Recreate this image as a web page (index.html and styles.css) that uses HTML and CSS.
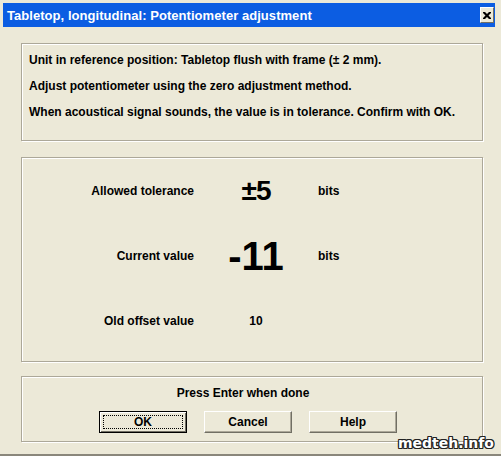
FILE: index.html
```html
<!DOCTYPE html>
<html>
<head>
<meta charset="utf-8">
<link rel="stylesheet" href="styles.css">
</head>
<body>
<div class="window">
  <div class="titlebar">
    <span class="title">Tabletop, longitudinal: Potentiometer adjustment</span>
    <span class="close">
      <svg width="8" height="7" viewBox="0 0 8 7"><path d="M0 0h2l2 2 2-2h2v1l-2.5 2.5L8 6v1H6L4 5 2 7H0V6l2.5-2.5L0 1z" fill="#000"/></svg>
    </span>
  </div>
  <div class="content">
    <div class="group info">
      <p>Unit in reference position: Tabletop flush with frame (± 2 mm).</p>
      <p>Adjust potentiometer using the zero adjustment method.</p>
      <p>When acoustical signal sounds, the value is in tolerance. Confirm with OK.</p>
    </div>
    <div class="group values">
      <div class="row">
        <span class="label">Allowed tolerance</span>
        <span class="val mid">±5</span>
        <span class="unit">bits</span>
      </div>
      <div class="row">
        <span class="label">Current value</span>
        <span class="val big">-11</span>
        <span class="unit">bits</span>
      </div>
      <div class="row">
        <span class="label">Old offset value</span>
        <span class="val small">10</span>
        <span class="unit"></span>
      </div>
    </div>
    <div class="group actions">
      <div class="hint">Press Enter when done</div>
      <div class="buttons">
        <button class="btn default"><span class="focus">OK</span></button>
        <button class="btn">Cancel</button>
        <button class="btn">Help</button>
      </div>
    </div>
  </div>
  <div class="watermark">medteh.info</div>
</div>
</body>
</html>
```
FILE: styles.css
```css
html, body {
  margin: 0;
  padding: 0;
}
body {
  width: 501px;
  height: 456px;
  overflow: hidden;
  background: #ECE9D8;
  font-family: "Liberation Sans", Arial, sans-serif;
  font-size: 12px;
  font-weight: bold;
  color: #000;
}
.window {
  position: relative;
  box-sizing: border-box;
  width: 501px;
  height: 456px;
  padding: 3px 6px 0 3px;
  background: #ECE9D8;
  border-bottom: 2px solid #8a877b;
}
.titlebar {
  height: 24px;
  background: #0c5de2;
  display: flex;
  align-items: center;
  justify-content: space-between;
  padding: 0 1px 0 4px;
}
.title {
  color: #fff;
  font-size: 13px;
  font-weight: bold;
  letter-spacing: 0.05px;
}
.close {
  box-sizing: border-box;
  width: 14px;
  height: 16px;
  background: #ECE9D8;
  border-top: 1px solid #fff;
  border-left: 1px solid #fff;
  border-right: 1px solid #716f64;
  border-bottom: 1px solid #716f64;
  display: flex;
  align-items: center;
  justify-content: center;
}
.content {
  padding: 16px 12px 0 18px;
  display: flex;
  flex-direction: column;
}
.group {
  border: 1px solid #aca899;
  box-shadow: inset 1px 1px 0 #fff, 1px 1px 0 #fff;
}
.info {
  height: 98px;
  box-sizing: border-box;
  padding: 3px 0 0 7px;
}
.info p {
  margin: 0;
  line-height: 26px;
}
.values {
  margin-top: 16px;
  height: 205px;
  box-sizing: border-box;
  padding: 0;
}
.row {
  height: 65px;
  display: grid;
  grid-template-columns: 172px 80px 60px;
  column-gap: 22px;
  align-items: center;
}
.label {
  text-align: right;
}
.val {
  text-align: center;
  line-height: 1;
}
.val.mid {
  font-size: 28px;
  letter-spacing: -1px;
}
.val.big {
  font-size: 40px;
  letter-spacing: 0;
}
.val.small {
  font-size: 12px;
}
.actions {
  margin-top: 14px;
  height: 66px;
  box-sizing: border-box;
  padding-top: 10px;
}
.hint {
  text-align: center;
  padding-right: 18px;
  line-height: 13px;
}
.buttons {
  display: flex;
  gap: 17px;
  padding-left: 77px;
  margin-top: 11px;
}
.btn {
  box-sizing: border-box;
  width: 88px;
  height: 22px;
  margin: 0;
  padding: 0;
  font: inherit;
  color: #000;
  background: #ECE9D8;
  border-top: 1px solid #fff;
  border-left: 1px solid #fff;
  border-right: 1px solid #716f64;
  border-bottom: 1px solid #716f64;
  box-shadow: inset -1px -1px 0 #aca899;
}
.btn.default {
  border: 1px solid #000;
  box-shadow: inset 1px 1px 0 #fff, inset -1px -1px 0 #716f64;
  padding: 3px;
}
.focus {
  display: block;
  height: 100%;
  box-sizing: border-box;
  border: 1px dotted #000;
  line-height: 12px;
}
.watermark {
  position: absolute;
  right: 7px;
  bottom: 3px;
  font-family: "DejaVu Sans", sans-serif;
  font-size: 14px;
  font-weight: bold;
  color: #fff;
  letter-spacing: 0;
  text-shadow: -1px -1px 0 #222, 1px -1px 0 #222, -1px 1px 0 #222, 1px 1px 0 #222, 0 1px 0 #222, 0 -1px 0 #222, 1px 0 0 #222, -1px 0 0 #222;
}
```
